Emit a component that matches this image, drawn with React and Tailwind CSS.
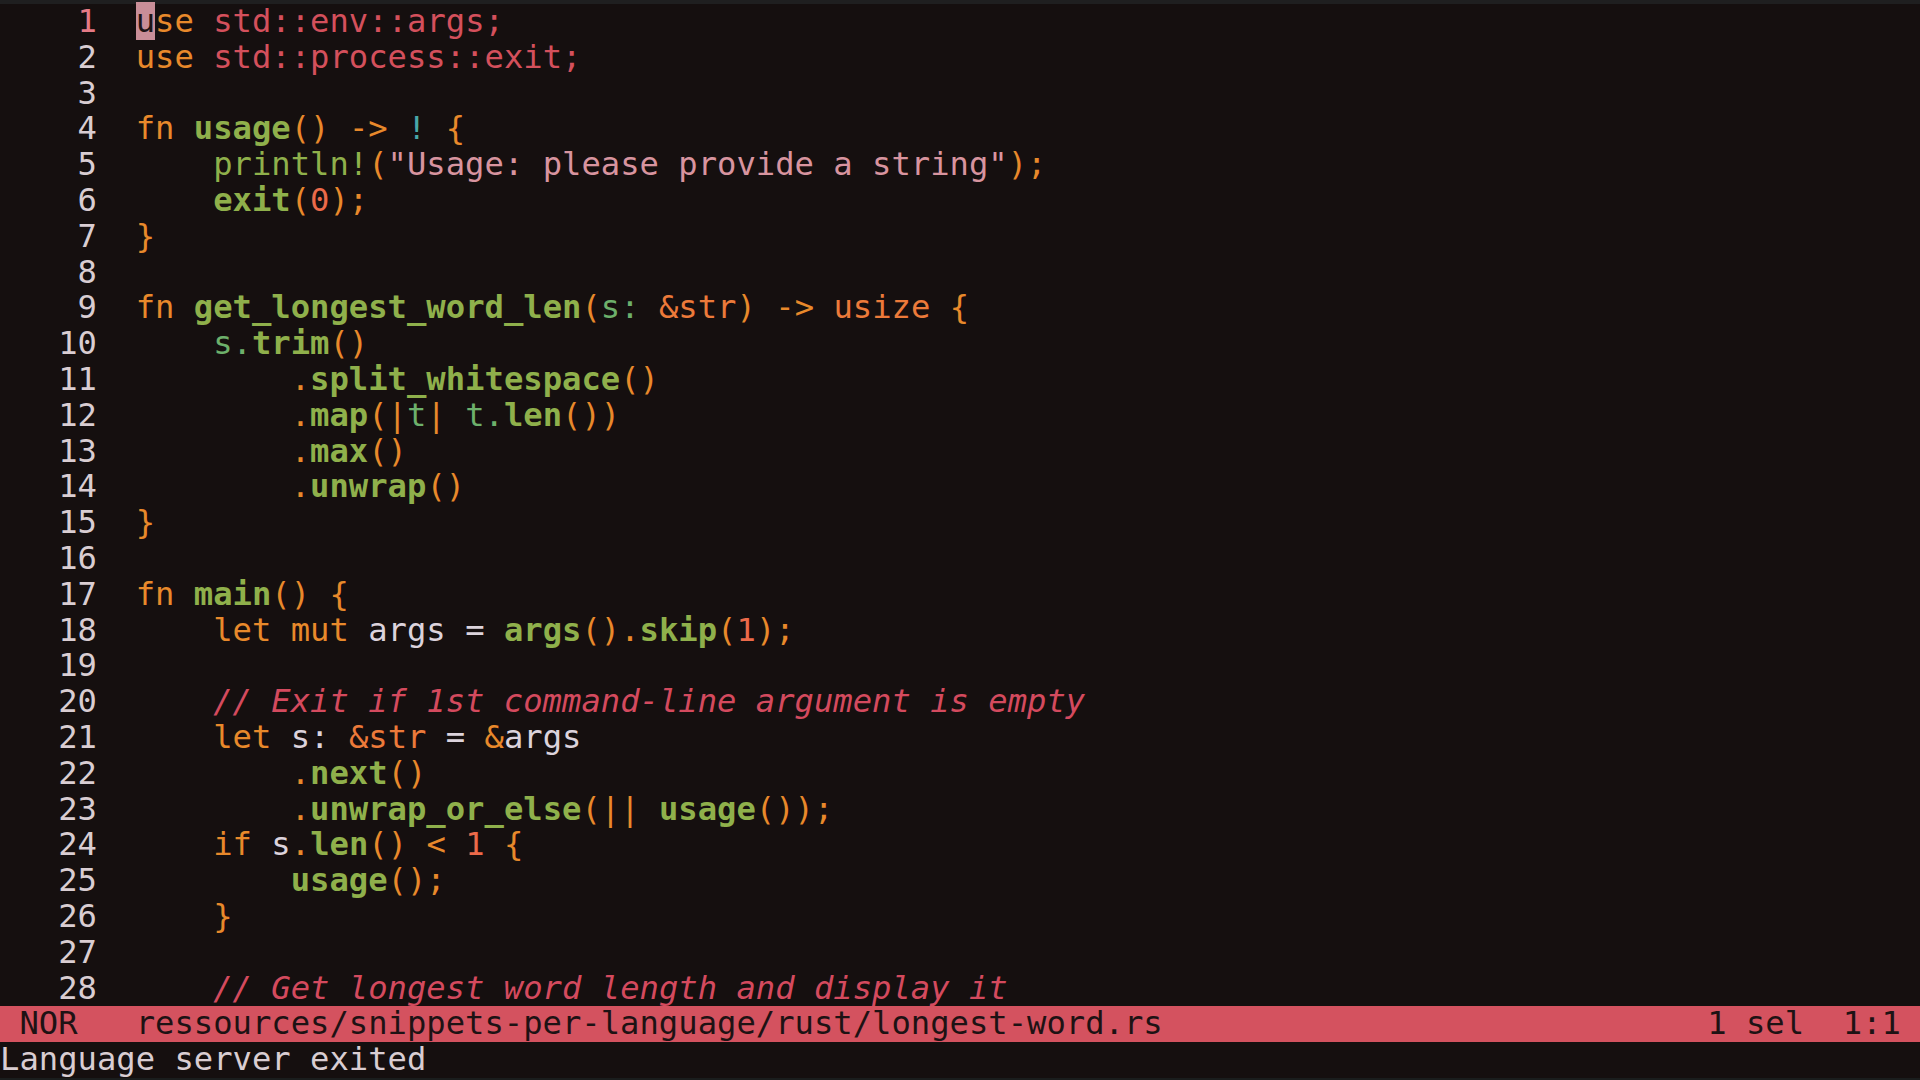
import React from "react";

const K = "text-[#e8892b]";
const N = "text-[#d4505c]";
const F = "text-[#8fb04b] font-bold";
const M = "text-[#8fb04b]";
const P = "text-[#e8892b]";
const V = "text-[#dcd3dc]";
const A = "text-[#6db06b]";
const S = "text-[#d8949f]";
const C = "text-[#d44a5e] italic";
const NUM = "text-[#ec6a4a]";
const T = "text-[#ec7a3a]";
const X = "text-[#48a8a8]";
const W = "";

const lines = [
  [["CURSOR", "u"], [K, "se"], [W, " "], [N, "std::env::args;"]],
  [[K, "use"], [W, " "], [N, "std::process::exit;"]],
  [],
  [[K, "fn"], [W, " "], [F, "usage"], [P, "()"], [W, " "], [P, "->"], [W, " "], [X, "!"], [W, " "], [P, "{"]],
  [[W, "    "], [M, "println!"], [P, "("], [S, '"Usage: please provide a string"'], [P, ");"]],
  [[W, "    "], [F, "exit"], [P, "("], [NUM, "0"], [P, ");"]],
  [[P, "}"]],
  [],
  [[K, "fn"], [W, " "], [F, "get_longest_word_len"], [P, "("], [A, "s:"], [W, " "], [T, "&str"], [P, ")"], [W, " "], [P, "->"], [W, " "], [T, "usize"], [W, " "], [P, "{"]],
  [[W, "    "], [A, "s."], [F, "trim"], [P, "()"]],
  [[W, "        "], [P, "."], [F, "split_whitespace"], [P, "()"]],
  [[W, "        "], [P, "."], [F, "map"], [P, "(|"], [A, "t"], [P, "|"], [W, " "], [A, "t."], [F, "len"], [P, "())"]],
  [[W, "        "], [P, "."], [F, "max"], [P, "()"]],
  [[W, "        "], [P, "."], [F, "unwrap"], [P, "()"]],
  [[P, "}"]],
  [],
  [[K, "fn"], [W, " "], [F, "main"], [P, "()"], [W, " "], [P, "{"]],
  [[W, "    "], [K, "let mut"], [W, " "], [V, "args"], [W, " "], [V, "="], [W, " "], [F, "args"], [P, "()"], [P, "."], [F, "skip"], [P, "("], [NUM, "1"], [P, ");"]],
  [],
  [[W, "    "], [C, "// Exit if 1st command-line argument is empty"]],
  [[W, "    "], [K, "let"], [W, " "], [V, "s:"], [W, " "], [T, "&str"], [W, " "], [V, "="], [W, " "], [P, "&"], [V, "args"]],
  [[W, "        "], [P, "."], [F, "next"], [P, "()"]],
  [[W, "        "], [P, "."], [F, "unwrap_or_else"], [P, "(||"], [W, " "], [F, "usage"], [P, "());"]],
  [[W, "    "], [K, "if"], [W, " "], [V, "s"], [P, "."], [F, "len"], [P, "()"], [W, " "], [P, "<"], [W, " "], [NUM, "1"], [W, " "], [P, "{"]],
  [[W, "        "], [F, "usage"], [P, "();"]],
  [[W, "    "], [P, "}"]],
  [],
  [[W, "    "], [C, "// Get longest word length and display it"]],
];

export default function App() {
  return (
    <div className="w-[1920px] h-[1080px] overflow-hidden flex flex-col bg-[#1a1d1d] font-['DejaVu_Sans_Mono',monospace] text-[32.2px] text-[#dcd3dc]">
      <div className="h-[4px] shrink-0 bg-[#1f1f20]" />
      <div className="bg-[#150f0f] shrink-0">
        {lines.map((segs, i) => (
          <div key={i} className="h-[35.8px] leading-[35.8px] whitespace-pre">
            <span className={i === 0 ? "text-[#e57a86]" : "text-[#d9cdd2]"}>
              {String(i + 1).padStart(5, " ")}
            </span>
            <span>{"  "}</span>
            {segs.map(([cls, txt], j) =>
              cls === "CURSOR" ? (
                <span key={j} className="bg-[#c98e98] text-[#1d1416]">
                  {txt}
                </span>
              ) : (
                <span key={j} className={cls}>
                  {txt}
                </span>
              )
            )}
          </div>
        ))}
      </div>
      <div className="h-[35.8px] leading-[35.8px] shrink-0 bg-[#d4525f] text-[#1e1214] whitespace-pre flex justify-between pr-[19px]">
        <span>{" NOR   ressources/snippets-per-language/rust/longest-word.rs"}</span>
        <span>{"1 sel  1:1"}</span>
      </div>
      <div className="h-[35.8px] leading-[35.8px] shrink-0 bg-[#150f0f] text-[#d9cdd2] whitespace-pre">
        {"Language server exited"}
      </div>
      <div className="flex-1 bg-[#1a1d1d]" />
    </div>
  );
}
